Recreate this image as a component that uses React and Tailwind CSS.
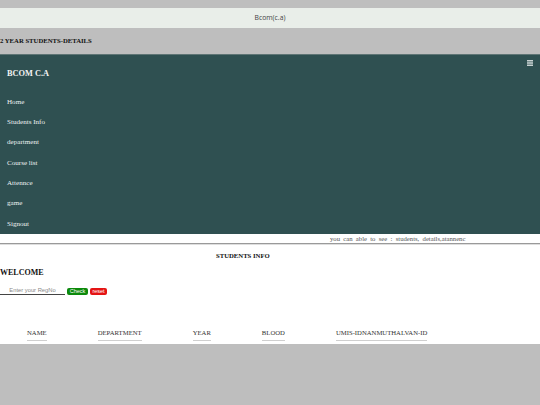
import React from "react";

const serif = { fontFamily: '"Liberation Serif", "Times New Roman", serif' };

export default function App() {
  const menu = ["Home", "Students Info", "department", "Course list", "Attennce", "game", "Signout"];
  const cols = ["NAME", "DEPARTMENT", "YEAR", "BLOOD", "UMIS-IDNANMUTHALVAN-ID"];
  return (
    <div className="min-h-[405px] w-[540px] bg-[#bebebe] pt-[8px]" style={serif}>
      <div
        className="h-[20px] bg-[#e9eee9] flex items-center justify-center text-[6.8px] text-[#444]"
        style={{ fontFamily: '"Open Sans", sans-serif' }}
      >
        Bcom(c.a)
      </div>
      <div className="h-[26px] flex items-center font-bold text-[6.7px] text-[#111]">
        2 YEAR STUDENTS-DETAILS
      </div>
      <nav className="bg-[#2f5051] border-t border-[#5f7575] flex flex-col text-white">
        <div className="h-[37px] flex justify-between items-start">
          <div className="ml-[7px] mt-[13px] font-bold text-[8.3px] text-[#f4f4f4]">BCOM C.A</div>
          <svg className="mt-[5px] mr-[7px]" width="6" height="6" viewBox="0 0 6 6">
            <rect x="0" y="0" width="6" height="1.5" fill="#c9d2d2" />
            <rect x="0" y="2.25" width="6" height="1.5" fill="#c9d2d2" />
            <rect x="0" y="4.5" width="6" height="1.5" fill="#c9d2d2" />
          </svg>
        </div>
        <ul className="flex flex-col">
          {menu.map((m) => (
            <li key={m} className="h-[20.3px] flex items-center pl-[7px] text-[7.1px] text-[#eef2f2]">
              {m}
            </li>
          ))}
        </ul>
      </nav>
      <div className="bg-white h-[110px] flex flex-col">
        <div className="h-[9px] flex items-center pl-[330px] text-[6.7px] text-[#555] whitespace-nowrap overflow-hidden [word-spacing:1.6px]">
          you can able to see : students, details,atannenc
        </div>
        <div className="h-[2px] border-t border-[#9a9a9a] border-b border-b-[#dedede]" />
        <div className="h-[21px] flex items-center pl-[216px] font-bold text-[6.7px] text-[#111]">
          STUDENTS INFO
        </div>
        <div className="h-[13px] flex items-center font-bold text-[8px] text-[#111]">WELCOME</div>
        <div className="mt-[7px] flex items-end gap-[2px] h-[9px]">
          <div
            className="w-[65px] h-[8px] border-b border-[#444] flex items-center justify-center text-[5.8px] text-[#888]"
            style={{ fontFamily: '"Liberation Sans", Arial, sans-serif' }}
          >
            Enter your RegNo
          </div>
          <div
            className="h-[7px] w-[21px] mb-[0.5px] rounded-[2px] bg-[#0c8a0c] text-white text-[5.5px] flex items-center justify-center"
            style={{ fontFamily: '"Liberation Sans", Arial, sans-serif' }}
          >
            Check
          </div>
          <div
            className="h-[7px] w-[17px] mb-[0.5px] rounded-[2px] bg-[#e41414] text-white text-[5.5px] flex items-center justify-center"
            style={{ fontFamily: '"Liberation Sans", Arial, sans-serif' }}
          >
            reset
          </div>
        </div>
        <div className="mt-[34px] flex pl-[27px] gap-[51px]">
          {cols.map((c) => (
            <div key={c} className="h-[12px] flex items-center pb-[3px] text-[6.7px] text-[#333] border-b border-[#cfcfcf]">
              {c}
            </div>
          ))}
        </div>
      </div>
    </div>
  );
}
